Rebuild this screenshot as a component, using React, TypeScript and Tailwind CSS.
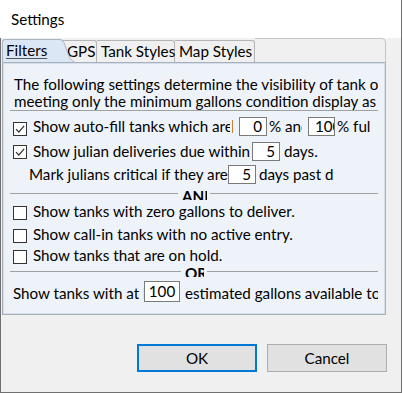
import React from "react";

function Check({ checked, mt }: { checked: boolean; mt: string }) {
  return (
    <div className={`w-[14px] h-[14px] shrink-0 border border-[#333333] bg-white flex items-center justify-center ${mt}`}>
      {checked && (
        <svg width="12" height="12" viewBox="0 0 12 12">
          <path d="M2 6.2 L4.8 9 L10.2 2.8" fill="none" stroke="#333333" strokeWidth="1.2" />
        </svg>
      )}
    </div>
  );
}

function Box({ w, h, value, align }: { w: string; h: string; value: string; align: "end" | "start" | "center" }) {
  const a = align === "end" ? "justify-end pr-[4px]" : align === "start" ? "justify-start pl-[6px]" : "justify-center";
  return (
    <div className={`${w} ${h} shrink-0 border border-[#7a7a7a] bg-white flex items-center overflow-hidden whitespace-nowrap leading-[17px] ${a}`}>
      {value}
    </div>
  );
}

function Separator({ label, boxW, lineMt, h }: { label: string; boxW: string; lineMt: string; h: string }) {
  return (
    <div className={`flex items-start ${h}`}>
      <div className={`flex-1 h-px bg-[#a0a0a0] ${lineMt}`} />
      <div className={`${boxW} shrink-0 h-full overflow-hidden font-bold whitespace-nowrap leading-[20px] ml-[4px] mr-[3px]`}>
        <div className="mt-[-5px]">{label}</div>
      </div>
      <div className={`flex-1 h-px bg-[#a0a0a0] ${lineMt}`} />
    </div>
  );
}

export default function App() {
  return (
    <div className="w-[403px] h-[393px] bg-white font-['Lato',sans-serif] text-[15.2px] text-black overflow-hidden whitespace-nowrap">
      <div className="w-[402px] h-[393px] flex flex-col bg-[#f0f0f0]">
        <div className="h-[38px] shrink-0 bg-white border-r border-[#707070] pl-[11px] pt-[9px] leading-[20px]">Settings</div>
        <div className="flex-1 flex flex-col border-l border-r border-b border-[#707070]">
          {/* tab strip */}
          <div className="relative ml-[1px] w-[384px] h-[24px] flex items-stretch">
            <div className="w-[56px] shrink-0 bg-[#dce7f5] border-l border-t border-[#a9b4c2] rounded-tl-[3px] mt-[1px] pl-[3px] leading-[18px] pt-[1px] z-10">
              <span className="underline decoration-[#555] underline-offset-[2px]">Filters</span>
            </div>
            <svg className="absolute left-[56px] top-[1px] z-10" width="16" height="23" viewBox="0 0 16 23">
              <path d="M0 0 L1 0 C6 0 6 4 9 12 C11 18 13 22 16 23 L0 23 Z" fill="#dce7f5" />
              <path d="M0 0.5 L1 0.5 C6 0.5 6 4 9 12 C11 18 13 22 16 22.5" fill="none" stroke="#a9b4c2" strokeWidth="1" />
            </svg>
            <div className="w-[39px] shrink-0 border-t border-r border-[#b4b4b4] rounded-tr-[3px] mt-[2px] pl-[9px] leading-[18px] pt-[1px]">GPS</div>
            <div className="w-[78px] shrink-0 border-t border-r border-[#b4b4b4] rounded-tr-[3px] mt-[2px] pl-[4px] leading-[18px] pt-[1px]">Tank Styles</div>
            <div className="w-[80px] shrink-0 border-t border-r border-[#b4b4b4] rounded-tr-[3px] mt-[2px] pl-[4px] leading-[18px] pt-[1px]">Map Styles</div>
            <div className="flex-1 border-r border-t border-[#c4c4c4] rounded-tr-[5px] mt-[0px]" />
          </div>
          {/* panel */}
          <div className="ml-[1px] w-[384px] h-[253px] shrink-0 border border-[#a9b0ba] bg-[#d3deec] p-px">
            <div className="h-full bg-[#eef3f9] pl-[6px] pr-[4px]">
              <div className="w-[368px] h-full overflow-hidden flex flex-col">
                <div className="mt-[12px] h-[34px] shrink-0 overflow-hidden leading-[17px] pl-[4px]">
                  <div>The following settings determine the visibility of tank orders</div>
                  <div>meeting only the minimum gallons condition display as</div>
                </div>
                <div className="h-px shrink-0 bg-[#a0a0a0]" />
                {/* row 1 */}
                <div className="mt-[6px] h-[19px] shrink-0 flex items-start pl-[3px]">
                  <Check checked mt="mt-[5px]" />
                  <div className="ml-[6px] w-[197px] shrink-0 leading-[19px] overflow-hidden">Show auto-fill tanks which are between</div>
                  <div className="w-[9px] shrink-0 h-[14px] mt-[3px] flex items-start"><div className="ml-[2px] w-px h-[13px] bg-[#c8823c]" /></div>
                  <Box w="w-[28px]" h="h-[19px]" value="0" align="end" />
                  <div className="ml-[2px] w-[33px] shrink-0 leading-[19px] overflow-hidden">% and</div>
                  <div className="ml-[6px] shrink-0 flex">
                    <Box w="w-[27px]" h="h-[19px]" value="100" align="start" />
                  </div>
                  <div className="ml-[2px] w-[34px] shrink-0 leading-[19px] overflow-hidden">% full</div>
                </div>
                {/* row 2 */}
                <div className="mt-[6px] h-[19px] shrink-0 flex items-start pl-[3px]">
                  <Check checked mt="mt-[3px]" />
                  <div className="ml-[6px] w-[219px] shrink-0 leading-[19px] overflow-hidden">Show julian deliveries due within</div>
                  <Box w="w-[28px]" h="h-[19px]" value="5" align="end" />
                  <div className="ml-[4px] leading-[19px]">days.</div>
                </div>
                {/* row 3 */}
                <div className="mt-[4px] h-[18px] shrink-0 flex items-start pl-[19px]">
                  <div className="w-[199px] shrink-0 leading-[19px] overflow-hidden">Mark julians critical if they are</div>
                  <Box w="w-[28px]" h="h-[19px]" value="5" align="end" />
                  <div className="ml-[3px] w-[75px] shrink-0 leading-[19px] overflow-hidden">days past due.</div>
                </div>
                <div className="mt-[8px] shrink-0">
                  <Separator label="AND" boxW="w-[25px]" lineMt="mt-[2px]" h="h-[9px]" />
                </div>
                {/* rows 4-6 */}
                <div className="mt-[2px] h-[19px] shrink-0 flex items-start pl-[3px]">
                  <Check checked={false} mt="mt-[4px]" />
                  <div className="ml-[6px] leading-[19px]">Show tanks with zero gallons to deliver.</div>
                </div>
                <div className="mt-[4px] h-[19px] shrink-0 flex items-start pl-[3px]">
                  <Check checked={false} mt="mt-[4px]" />
                  <div className="ml-[6px] leading-[19px]">Show call-in tanks with no active entry.</div>
                </div>
                <div className="mt-[2px] h-[19px] shrink-0 flex items-start pl-[3px]">
                  <Check checked={false} mt="mt-[4px]" />
                  <div className="ml-[6px] leading-[19px]">Show tanks that are on hold.</div>
                </div>
                <div className="mt-[3px] shrink-0">
                  <Separator label="OR" boxW="w-[19px]" lineMt="mt-[3px]" h="h-[9px]" />
                </div>
                {/* row 7 */}
                <div className="mt-[4px] h-[21px] shrink-0 flex items-start pl-[3px]">
                  <div className="w-[131px] shrink-0 leading-[19px] mt-[3px] overflow-hidden">Show tanks with at least</div>
                  <Box w="w-[36px]" h="h-[21px]" value="100" align="center" />
                  <div className="ml-[5px] leading-[19px] mt-[3px]">estimated gallons available to deliver.</div>
                </div>
              </div>
            </div>
          </div>
          {/* buttons */}
          <div className="mt-[29px] flex justify-end gap-[10px] pr-[14px]">
            <div className="w-[120px] h-[28px] border-2 border-[#0078d7] bg-[#e1e1e1] flex items-center justify-center leading-[20px]">OK</div>
            <div className="w-[120px] h-[28px] border border-[#adadad] bg-[#e1e1e1] flex items-center justify-center leading-[20px]">Cancel</div>
          </div>
        </div>
      </div>
    </div>
  );
}
